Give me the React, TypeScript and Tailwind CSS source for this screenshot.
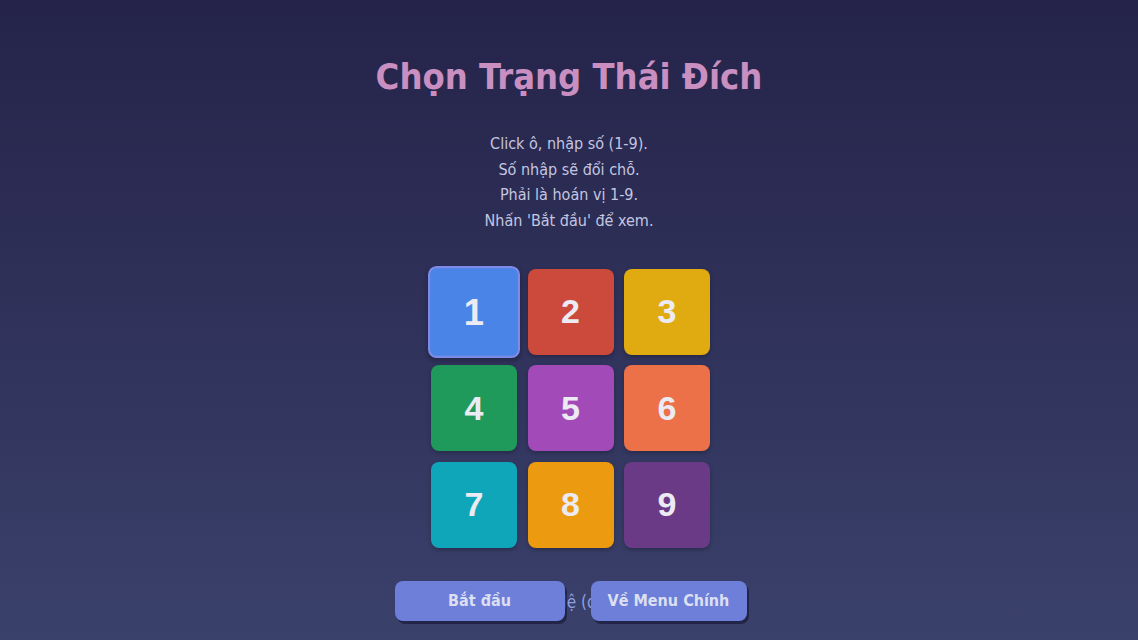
import React, { useState } from "react";

const tiles = [
  { n: 1, bg: "bg-[#4a84e6]" },
  { n: 2, bg: "bg-[#cc4a3c]" },
  { n: 3, bg: "bg-[#e0ab10]" },
  { n: 4, bg: "bg-[#1f9a5a]" },
  { n: 5, bg: "bg-[#a24bb8]" },
  { n: 6, bg: "bg-[#ec7048]" },
  { n: 7, bg: "bg-[#10a6ba]" },
  { n: 8, bg: "bg-[#ec9a10]" },
  { n: 9, bg: "bg-[#6a3a86]" },
];

export default function App() {
  const [selected, setSelected] = useState(0);

  return (
    <div className="min-h-screen w-full bg-gradient-to-b from-[#25234a] to-[#3a416b] flex flex-col items-center font-['DejaVu_Sans_Condensed','DejaVu_Sans',sans-serif]">
      <h1 className="mt-[54px] text-[36px] leading-[46px] font-bold text-[#c88fc0]">
        Chọn Trạng Thái Đích
      </h1>

      <div className="mt-[31px] text-center text-[16px] leading-[25.7px] text-[#c4c6e0]">
        <p>Click ô, nhập số (1-9).</p>
        <p>Số nhập sẽ đổi chỗ.</p>
        <p>Phải là hoán vị 1-9.</p>
        <p>Nhấn 'Bắt đầu' để xem.</p>
      </div>

      <div className="mt-[35px] ml-[3px] grid grid-cols-[86px_86px_86px] gap-x-[10.5px] gap-y-[10.5px] font-['Liberation_Sans',sans-serif]">
        {tiles.map((t, i) => (
          <button
            key={t.n}
            onClick={() => setSelected(i)}
            className={`h-[86px] w-[86px] rounded-[8px] ${t.bg} flex items-center justify-center text-[34px] font-bold text-[#ecebf3] shadow-[0_2px_4px_rgba(0,0,0,0.25)] ${
              selected === i ? "scale-[1.07] border-2 border-[#7d8ae6]" : ""
            }`}
          >
            {t.n}
          </button>
        ))}
      </div>

      <div className="mt-[33px] ml-[3px] relative flex items-center justify-center">
        <p className="absolute inset-x-0 top-[9px] pl-[18px] text-center text-[17px] text-[#8fa0e0] whitespace-nowrap">
          Hợp lệ (đúng)
        </p>
        <div className="relative flex gap-[26px]">
          <button className="h-[40px] w-[170px] rounded-[8px] bg-[#6d7fd8] text-[16px] font-bold text-[#dcdff2] shadow-[2px_3px_0_rgba(20,20,50,0.6)]">
            Bắt đầu
          </button>
          <button className="h-[40px] w-[156px] rounded-[8px] bg-[#6d7fd8] text-[16px] font-bold text-[#dcdff2] shadow-[2px_3px_0_rgba(20,20,50,0.6)]">
            Về Menu Chính
          </button>
        </div>
      </div>
    </div>
  );
}
